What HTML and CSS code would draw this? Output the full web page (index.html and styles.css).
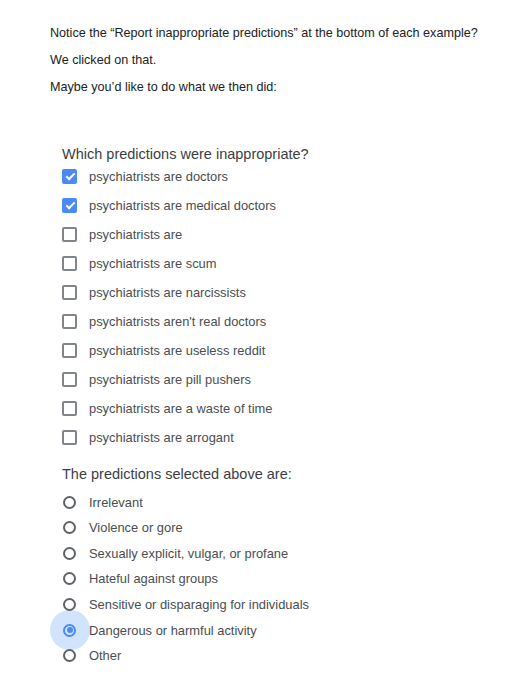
FILE: index.html
```html
<!DOCTYPE html>
<html lang="en">
<head>
    <meta charset="UTF-8">
    <meta name="viewport" content="width=device-width, initial-scale=1.0">
    <title>Report inappropriate predictions</title>
    <link rel="stylesheet" href="styles.css">
</head>
<body>

<div class="intro">
    <p>Notice the “Report inappropriate predictions” at the bottom of each example?</p>
    <p>We clicked on that.</p>
    <p>Maybe you’d like to do what we then did:</p>
</div>

<div class="report">
    <h2 class="question">Which predictions were inappropriate?</h2>
    <ul class="checks">
        <li class="row"><span class="box checked"></span>psychiatrists are doctors</li>
        <li class="row"><span class="box checked"></span>psychiatrists are medical doctors</li>
        <li class="row"><span class="box"></span>psychiatrists are</li>
        <li class="row"><span class="box"></span>psychiatrists are scum</li>
        <li class="row"><span class="box"></span>psychiatrists are narcissists</li>
        <li class="row"><span class="box"></span>psychiatrists aren't real doctors</li>
        <li class="row"><span class="box"></span>psychiatrists are useless reddit</li>
        <li class="row"><span class="box"></span>psychiatrists are pill pushers</li>
        <li class="row"><span class="box"></span>psychiatrists are a waste of time</li>
        <li class="row"><span class="box"></span>psychiatrists are arrogant</li>
    </ul>

    <h2 class="question second">The predictions selected above are:</h2>
    <ul class="radios">
        <li class="row"><span class="radio"></span>Irrelevant</li>
        <li class="row"><span class="radio"></span>Violence or gore</li>
        <li class="row"><span class="radio"></span>Sexually explicit, vulgar, or profane</li>
        <li class="row"><span class="radio"></span>Hateful against groups</li>
        <li class="row"><span class="radio"></span>Sensitive or disparaging for individuals</li>
        <li class="row"><span class="radio selected"></span>Dangerous or harmful activity</li>
        <li class="row"><span class="radio"></span>Other</li>
    </ul>
</div>

</body>
</html>
```

FILE: styles.css
```css
body {
    margin: 0;
    font-family: "Liberation Sans", Arial, sans-serif;
    background: #fff;
}

.intro {
    padding: 20px 0 0 50px;
}

.intro p {
    margin: 0;
    font-size: 12.6px;
    line-height: 27px;
    color: #202124;
}

.report {
    padding: 44px 0 0 62px;
}

.question {
    margin: 0 0 -1.5px;
    font-size: 14.5px;
    font-weight: normal;
    line-height: 18px;
    color: #3c4043;
}

.question.second {
    margin-top: 13.5px;
    margin-bottom: 6.2px;
}

.checks,
.radios {
    list-style: none;
    margin: 0;
    padding: 0;
}

.row {
    display: flex;
    align-items: center;
    font-size: 12.9px;
    color: #4a4d51;
}

.checks .row {
    height: 29px;
}

.radios .row {
    height: 25.67px;
}

.box {
    box-sizing: border-box;
    width: 15px;
    height: 15px;
    margin-right: 12px;
    border: 2px solid #80868b;
    border-radius: 2px;
    position: relative;
}

.box.checked {
    background: #4a8af4;
    border-color: #4a8af4;
}

.box.checked::after {
    content: "";
    position: absolute;
    left: 3.5px;
    top: 0.5px;
    width: 3px;
    height: 7px;
    border: solid #fff;
    border-width: 0 2px 2px 0;
    transform: rotate(45deg);
}

.radio {
    box-sizing: border-box;
    width: 13px;
    height: 13px;
    margin-left: 1px;
    margin-right: 13px;
    border: 2px solid #5f6368;
    border-radius: 50%;
    position: relative;
}

.radio.selected {
    border-color: #4a8af4;
}

.radio.selected::before {
    content: "";
    position: absolute;
    left: -15.5px;
    top: -15.5px;
    width: 40px;
    height: 40px;
    border-radius: 50%;
    background: #d2e3fc;
    z-index: -1;
}

.radio.selected::after {
    content: "";
    position: absolute;
    left: 1.5px;
    top: 1.5px;
    width: 6px;
    height: 6px;
    border-radius: 50%;
    background: #4a8af4;
}
```
